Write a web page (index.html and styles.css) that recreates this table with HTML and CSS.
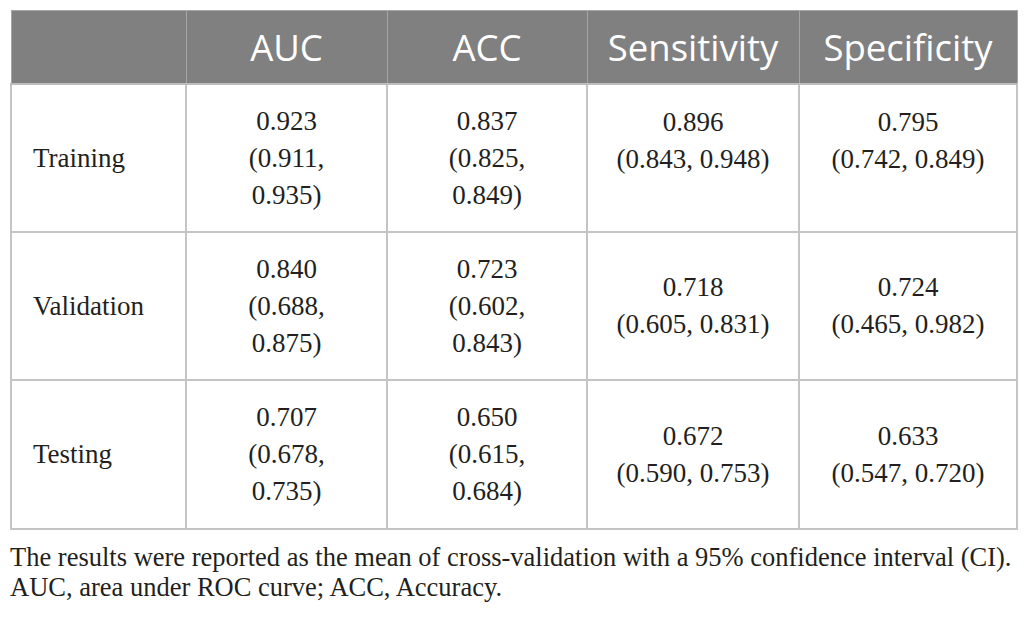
FILE: index.html
```html
<!DOCTYPE html>
<html>
<head>
<meta charset="utf-8">
<link rel="stylesheet" href="styles.css">
</head>
<body>
<div class="page">
<table class="results">
  <colgroup>
    <col class="c1"><col class="c2"><col class="c3"><col class="c4"><col class="c5">
  </colgroup>
  <thead>
    <tr>
      <th></th>
      <th>AUC</th>
      <th>ACC</th>
      <th>Sensitivity</th>
      <th>Specificity</th>
    </tr>
  </thead>
  <tbody>
    <tr>
      <td class="label">Training</td>
      <td>0.923<br>(0.911,<br>0.935)</td>
      <td>0.837<br>(0.825,<br>0.849)</td>
      <td class="top">0.896<br>(0.843, 0.948)</td>
      <td class="top">0.795<br>(0.742, 0.849)</td>
    </tr>
    <tr>
      <td class="label">Validation</td>
      <td>0.840<br>(0.688,<br>0.875)</td>
      <td>0.723<br>(0.602,<br>0.843)</td>
      <td>0.718<br>(0.605, 0.831)</td>
      <td>0.724<br>(0.465, 0.982)</td>
    </tr>
    <tr class="last">
      <td class="label">Testing</td>
      <td>0.707<br>(0.678,<br>0.735)</td>
      <td>0.650<br>(0.615,<br>0.684)</td>
      <td>0.672<br>(0.590, 0.753)</td>
      <td>0.633<br>(0.547, 0.720)</td>
    </tr>
  </tbody>
</table>
<p class="note">The results were reported as the mean of cross-validation with a 95% confidence interval (CI).<br>AUC, area under ROC curve; ACC, Accuracy.</p>
</div>
</body>
</html>
```
FILE: styles.css
```css
html, body {
  margin: 0;
  padding: 0;
  background: #ffffff;
}
.page {
  padding: 10px 10px 0 10px;
}
.results {
  border-collapse: collapse;
  width: 1006px;
  table-layout: fixed;
  font-family: "Liberation Serif", "Times New Roman", serif;
  color: #231f20;
}
.c1 { width: 175px; }
.c2 { width: 201px; }
.c3 { width: 200px; }
.c4 { width: 212px; }
.c5 { width: 218px; }
.results th {
  background: #7f807f;
  color: #ffffff;
  font-family: "Open Sans", "Liberation Sans", sans-serif;
  font-weight: normal;
  font-size: 36.5px;
  height: 72px;
  padding: 0;
  text-align: center;
  vertical-align: middle;
  border: 1px solid #a6a6a6;
  border-bottom: 2px solid #bdbdbd;
}
.results td {
  border: 2px solid #c4c4c4;
  height: 146px;
  padding: 0;
  text-align: center;
  vertical-align: middle;
  font-size: 27px;
  line-height: 37px;
}
.results tr.last td {
  height: 147px;
}
.results td.top {
  vertical-align: top;
  padding-top: 19px;
  height: 127px;
}
.results td.label {
  text-align: left;
  padding-left: 21px;
}
.note {
  margin: 12px 0 0 0;
  font-family: "Liberation Serif", "Times New Roman", serif;
  font-size: 26.5px;
  line-height: 30px;
  color: #231f20;
}
```
